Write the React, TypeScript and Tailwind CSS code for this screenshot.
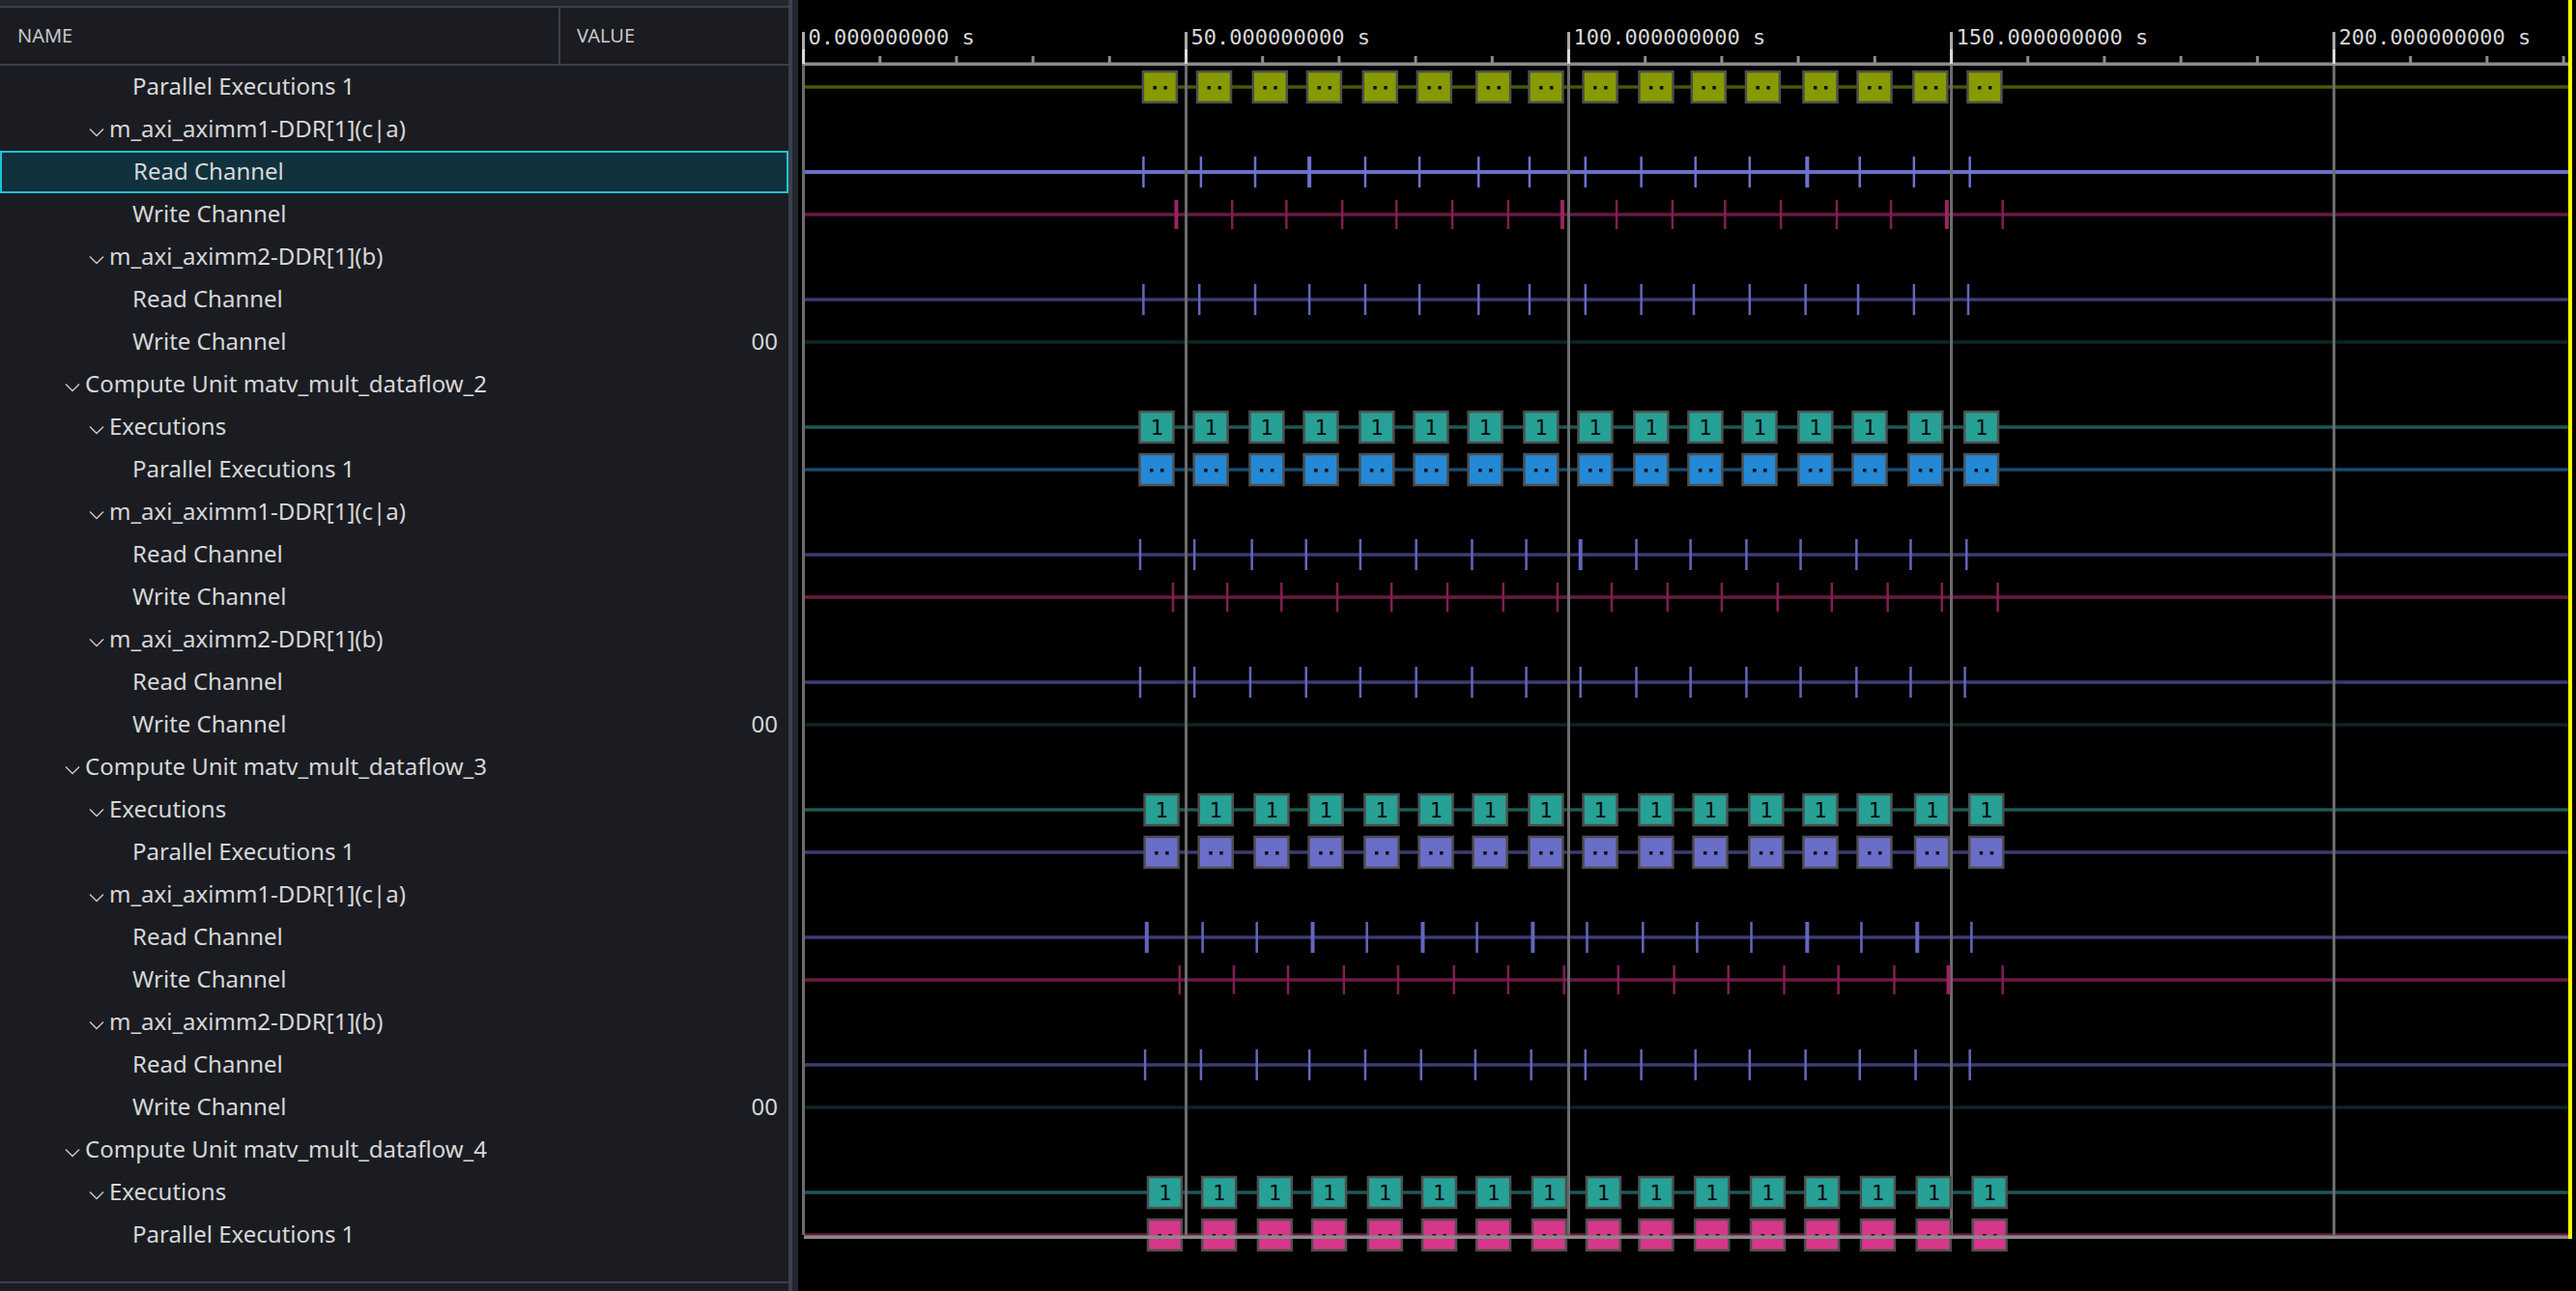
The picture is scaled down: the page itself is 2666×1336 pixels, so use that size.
type Kind = "group" | "par" | "exec" | "read" | "write" | "idle";

type Row = {
  label: string;
  indent: number;
  open?: boolean;
  value?: string;
  kind: Kind;
  line?: string;
  fill?: string;
  marks?: number[];
  thick?: number[];
  selected?: boolean;
};

const S = 1.7003;
const ROW_H = 44;
const TOP = 68;

const BOX_A = [706, 739, 773, 806, 840, 873, 909, 941, 974, 1008, 1040, 1073, 1108, 1141, 1175, 1208];
const BOX_B = [704, 737, 771, 804, 838, 871, 904, 938, 971, 1005, 1038, 1071, 1105, 1138, 1172, 1206];
const BOX_C = [707, 740, 774, 807, 841, 874, 907, 941, 974, 1008, 1041, 1075, 1108, 1141, 1176, 1209];
const BOX_D = [709, 742, 776, 809, 843, 876, 909, 943, 976, 1008, 1042, 1076, 1109, 1143, 1177, 1211];

const READ = "#3a3c72";
const WRITE = "#6a1a43";
const IDLE = "#0c2527";

const ROWS: Row[] = [
  { label: "Parallel Executions 1", indent: 137, kind: "par", line: "#4a5700", fill: "#879a00", marks: BOX_A },
  { label: "m_axi_aximm1-DDR[1](c|a)", indent: 92, open: true, kind: "group" },
  {
    label: "Read Channel", indent: 137, kind: "read", line: "#6a6fc7", selected: true,
    marks: [696, 731, 764, 797, 831, 864, 900, 931, 965, 999, 1032, 1065, 1100, 1132, 1165, 1199],
    thick: [797, 1100],
  },
  {
    label: "Write Channel", indent: 137, kind: "write", line: WRITE,
    marks: [716, 750, 783, 817, 850, 884, 918, 951, 984, 1018, 1050, 1084, 1118, 1151, 1185, 1219],
    thick: [716, 951, 1185],
  },
  { label: "m_axi_aximm2-DDR[1](b)", indent: 92, open: true, kind: "group" },
  {
    label: "Read Channel", indent: 137, kind: "read", line: READ,
    marks: [696, 730, 764, 797, 831, 864, 900, 931, 965, 999, 1031, 1065, 1099, 1131, 1165, 1198],
  },
  { label: "Write Channel", indent: 137, kind: "idle", value: "00", line: IDLE },
  { label: "Compute Unit matv_mult_dataflow_2", indent: 67, open: true, kind: "group" },
  { label: "Executions", indent: 92, open: true, kind: "exec", line: "#1b5a55", fill: "#27a096", marks: BOX_B },
  { label: "Parallel Executions 1", indent: 137, kind: "par", line: "#1a4a6b", fill: "#2389d6", marks: BOX_B },
  { label: "m_axi_aximm1-DDR[1](c|a)", indent: 92, open: true, kind: "group" },
  {
    label: "Read Channel", indent: 137, kind: "read", line: READ,
    marks: [694, 727, 762, 795, 828, 862, 896, 929, 962, 996, 1029, 1063, 1096, 1130, 1163, 1197],
    thick: [962],
  },
  {
    label: "Write Channel", indent: 137, kind: "write", line: WRITE,
    marks: [714, 747, 780, 814, 847, 881, 915, 948, 981, 1015, 1048, 1082, 1115, 1149, 1182, 1216],
  },
  { label: "m_axi_aximm2-DDR[1](b)", indent: 92, open: true, kind: "group" },
  {
    label: "Read Channel", indent: 137, kind: "read", line: READ,
    marks: [694, 727, 761, 795, 828, 862, 896, 929, 962, 996, 1029, 1063, 1096, 1130, 1163, 1196],
  },
  { label: "Write Channel", indent: 137, kind: "idle", value: "00", line: IDLE },
  { label: "Compute Unit matv_mult_dataflow_3", indent: 67, open: true, kind: "group" },
  { label: "Executions", indent: 92, open: true, kind: "exec", line: "#1b5a55", fill: "#27a096", marks: BOX_C },
  { label: "Parallel Executions 1", indent: 137, kind: "par", line: "#3a3c72", fill: "#6a6ec8", marks: BOX_C },
  { label: "m_axi_aximm1-DDR[1](c|a)", indent: 92, open: true, kind: "group" },
  {
    label: "Read Channel", indent: 137, kind: "read", line: READ,
    marks: [698, 732, 765, 799, 832, 866, 899, 933, 966, 1000, 1033, 1066, 1100, 1133, 1167, 1200],
    thick: [698, 799, 866, 933, 1100, 1167],
  },
  {
    label: "Write Channel", indent: 137, kind: "write", line: WRITE,
    marks: [718, 751, 784, 818, 851, 885, 918, 952, 985, 1019, 1052, 1086, 1119, 1153, 1186, 1219],
    thick: [1186],
  },
  { label: "m_axi_aximm2-DDR[1](b)", indent: 92, open: true, kind: "group" },
  {
    label: "Read Channel", indent: 137, kind: "read", line: READ,
    marks: [697, 731, 765, 797, 831, 865, 898, 932, 965, 999, 1032, 1065, 1099, 1132, 1166, 1199],
  },
  { label: "Write Channel", indent: 137, kind: "idle", value: "00", line: IDLE },
  { label: "Compute Unit matv_mult_dataflow_4", indent: 67, open: true, kind: "group" },
  { label: "Executions", indent: 92, open: true, kind: "exec", line: "#1b5a55", fill: "#27a096", marks: BOX_D },
  { label: "Parallel Executions 1", indent: 137, kind: "par", line: WRITE, fill: "#d6378a", marks: BOX_D },
];

// time axis: 0 s at x=831.5, 50 s every 396px
const T0 = 831.5;
const PX_PER_S = 7.92;
const tx = (t: number) => T0 + t * PX_PER_S;
const RIGHT = 2658;
const BOTTOM = 1278;

function Chevron() {
  return (
    <svg width="21" height="10" viewBox="0 0 21 10" className="shrink-0 mt-[7px]">
      <path d="M1 1.5 L8 8.5 L15 1.5" fill="none" stroke="#c9cacd" strokeWidth="1.4" />
    </svg>
  );
}

function NameList() {
  return (
    <div className="flex h-full w-[826px] shrink-0">
      <div className="flex flex-col w-[816px] bg-[#1b1c21]">
        <div className="h-[6px] bg-[#24252d]" />
        <div className="h-[2px] bg-[#3b3f4e]" />
        <div className="flex h-[58px] text-[20px] text-[#c6c8cc]">
          <div className="flex items-center w-[578px] pl-[18px]">NAME</div>
          <div className="w-[2px] bg-[#3b3f4e]" />
          <div className="flex items-center pl-[17px]">VALUE</div>
        </div>
        <div className="h-[2px] bg-[#3b3f4e]" />
        <div className="flex flex-col">
          {ROWS.map((r, i) => (
            <div
              key={i}
              className={`flex items-center h-[44px] pb-[2px] box-border text-[24px] text-[#d6d7da] ${
                r.selected ? "border-2 border-[#1fc3d1] bg-[#11313c]" : ""
              }`}
              style={{ paddingLeft: r.selected ? r.indent - 1 : r.indent }}
            >
              {r.open && <Chevron />}
              <span className="flex-1 whitespace-nowrap">{r.label}</span>
              {r.value && <span className="pr-[11px]">{r.value}</span>}
            </div>
          ))}
        </div>
        <div className="flex-1" />
        <div className="h-[2px] bg-[#3b3f4e]" />
        <div className="h-[8px]" />
      </div>
      <div className="w-[4px] bg-[#3b3f4e]" />
      <div className="w-[6px] bg-[#24252d]" />
    </div>
  );
}

function Box({ cx, cy, fill, label }: { cx: number; cy: number; fill: string; label?: string }) {
  return (
    <g>
      <rect x={cx - 17.5} y={cy - 16} width={35} height={32} fill={fill} stroke="#4e4e4e" strokeWidth={2.5} />
      {label ? (
        <text x={cx} y={cy + 8} textAnchor="middle" fontSize={22} fill="#0a0a0a" fontFamily="'DejaVu Sans Mono', monospace">
          {label}
        </text>
      ) : (
        <>
          <rect x={cx - 7} y={cy - 1} width={3.5} height={3.5} fill="#101010" />
          <rect x={cx + 4} y={cy - 1} width={3.5} height={3.5} fill="#101010" />
        </>
      )}
    </g>
  );
}

function Waveform() {
  const majors = [0, 50, 100, 150, 200];
  const minors: number[] = [];
  for (let t = 10; t <= 230; t += 10) if (t % 50 !== 0) minors.push(t);

  return (
    <div className="flex-1 bg-black">
      <svg width="1840" height="1336" viewBox="826 0 1840 1336" className="block">
        {/* signal base lines */}
        {ROWS.map((r, i) => {
          if (r.kind === "group") return null;
          const cy = TOP + i * ROW_H + 22;
          const w = r.selected ? 4 : 3.5;
          return <rect key={`l${i}`} x={832} y={cy - w / 2} width={RIGHT - 832} height={w} fill={r.line} />;
        })}

        {/* grid */}
        {majors.map((t) => (
          <rect key={`g${t}`} x={tx(t) - 1.5} y={66} width={3} height={BOTTOM - 66} fill="#6b6b6b" />
        ))}

        {/* transactions */}
        {ROWS.map((r, i) => {
          const cy = TOP + i * ROW_H + 22;
          if (r.kind === "read" || r.kind === "write") {
            const h = r.kind === "read" ? 16 : 15;
            const col = r.kind === "read" ? (r.selected ? "#6d72cc" : "#6266bb") : "#821e53";
            return (
              <g key={`t${i}`}>
                {r.marks!.map((m, j) => {
                  const thick = r.thick?.includes(m);
                  const w = thick ? 4 : 2.5;
                  return (
                    <rect
                      key={j}
                      x={m * S - w / 2}
                      y={cy - h}
                      width={w}
                      height={h * 2}
                      fill={thick && r.kind === "write" ? "#9a2560" : col}
                    />
                  );
                })}
              </g>
            );
          }
          if (r.kind === "par" || r.kind === "exec") {
            return (
              <g key={`b${i}`}>
                {r.marks!.map((m, j) => (
                  <Box key={j} cx={m * S} cy={cy} fill={r.fill!} label={r.kind === "exec" ? "1" : undefined} />
                ))}
              </g>
            );
          }
          return null;
        })}

        {/* ruler */}
        <rect x={830} y={64.5} width={RIGHT - 830} height={3.5} fill="#8c8c8c" />
        {minors.map((t) => (
          <rect key={`m${t}`} x={tx(t) - 1.5} y={58} width={3} height={8} fill="#8c8c8c" />
        ))}
        {majors.map((t) => (
          <g key={`M${t}`}>
            <rect x={tx(t) - 1.5} y={33} width={3} height={33} fill="#a9a9a9" />
            <rect x={tx(t) - 1.5} y={51} width={3} height={15} fill="#dadada" />
            <text
              x={tx(t) + 5}
              y={46}
              fontSize={22}
              fill="#d9d9d9"
              fontFamily="'DejaVu Sans Mono', monospace"
            >
              {`${t}.000000000 s`}
            </text>
          </g>
        ))}

        {/* bottom edge + cursor */}
        <rect x={832} y={1278.5} width={RIGHT - 832} height={3.5} fill="#8a8a8a" />
        <rect x={RIGHT} y={0} width={4} height={1282} fill="#ffff00" />
      </svg>
    </div>
  );
}

export default function App() {
  return (
    <div className="flex w-[2666px] h-[1336px] overflow-hidden bg-black font-['Noto_Sans',sans-serif]">
      <NameList />
      <Waveform />
    </div>
  );
}
